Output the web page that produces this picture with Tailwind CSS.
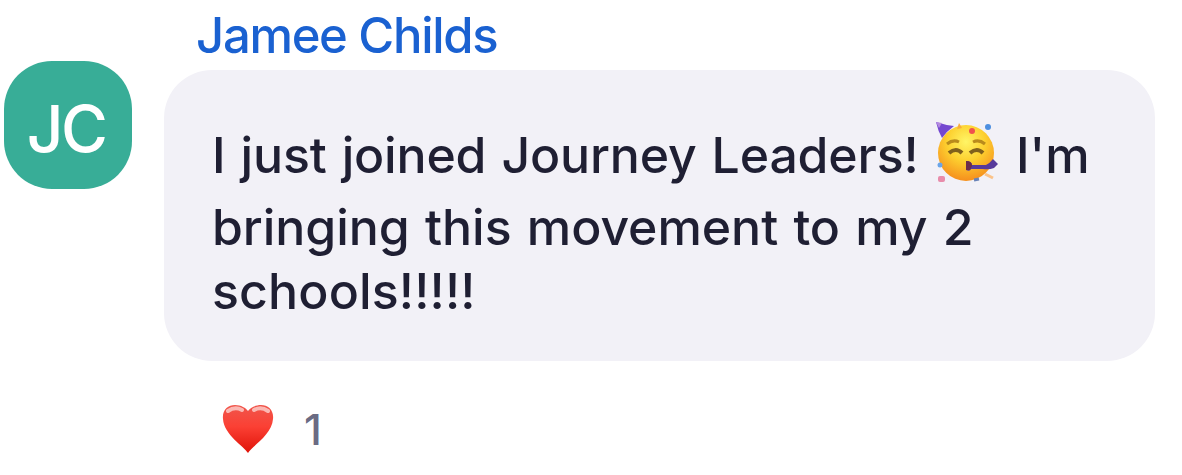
<!DOCTYPE html>
<html lang="en">
<head>
  <meta charset="UTF-8" />
  <meta name="viewport" content="width=device-width, initial-scale=1.0"/>
  <title>Chat Message</title>
  <script src="https://cdn.jsdelivr.net/npm/@tailwindcss/browser@4"></script>
</head>
<body class="bg-white font-['Inter','Liberation_Sans',sans-serif] overflow-hidden">

  <main class="flex items-start gap-8 pl-1">
    <!-- Avatar -->
    <div class="mt-[61px] w-32 h-32 shrink-0 rounded-[48px] bg-[#38ad97] text-white flex items-center justify-center">
      <span class="text-[64px] leading-none font-medium tracking-[-2.5px] pt-[7px] pr-[4px]">JC</span>
    </div>

    <div class="w-[991px]">
      <h1 class="h-[70px] pl-8 text-[49px] leading-[72px] font-medium tracking-[-1.3px] text-[#1a61d1] whitespace-nowrap">Jamee Childs</h1>

      <!-- Message bubble -->
      <div class="h-[291px] rounded-[48px] bg-[#f2f1f7] pt-[49px] pl-12">
        <p class="text-[50px] font-medium text-[#1f1f33] whitespace-nowrap [word-spacing:2px]">
          <span class="flex h-[72px] leading-[72px]">
            <span class="w-[705px] tracking-[-0.18px]">I just joined Journey Leaders!</span>
            <svg class="w-[66px] h-[64px] mt-px ml-[18px] shrink-0" viewBox="0 0 66 64">
              <defs>
                <radialGradient id="face" cx="0.5" cy="0.3" r="0.68">
                  <stop offset="0" stop-color="#fff566"/>
                  <stop offset="0.5" stop-color="#fdd02f"/>
                  <stop offset="1" stop-color="#f6921e"/>
                </radialGradient>
              </defs>
              <circle cx="31" cy="33" r="28" fill="url(#face)"/>
              <path d="M1 2Q10 5 19 6Q12 11 7 18Q3 11 1 2Z" fill="#7448d0"/>
              <path d="M1 2L7 3L4 8Z" fill="#b48ae0"/>
              <path d="M12 24Q18 19 24 22M38 22Q44 19 50 24" fill="none" stroke="#b98b1c" stroke-width="3"/>
              <path d="M14 33Q21 27 27 33M35 33Q42 27 48 33" fill="none" stroke="#80601c" stroke-width="4"/>
              <path d="M31 41Q37 41 37 45L51 45Q55 43 58 39L63 44L59 48Q54 50 48 49L36 49Q35 52 31 50Z" fill="#573a9b"/>
              <path d="M31 41Q37 41 37 46L35 50L31 50Z" fill="#6b2c4a"/>
              <circle cx="37" cy="11" r="3" fill="#f0524e"/>
              <circle cx="53" cy="7" r="3" fill="#4d8fe0"/>
              <circle cx="5" cy="45" r="2.5" fill="#6ba5e8"/>
              <rect x="3" y="56" width="7" height="6" rx="2" fill="#e88cab"/>
              <path d="M24 3L27 8L22 9Z" fill="#f8ac3c"/>
              <path d="M50 54L58 58" stroke="#fbc38a" stroke-width="3"/>
              <path d="M39 60L44 59" stroke="#6883b8" stroke-width="3"/>
            </svg>
            <span class="ml-[15px]">I'm</span>
          </span>
          <span class="block h-[72px] leading-[72px] tracking-[-0.05px]">bringing this movement to my 2</span>
          <span class="block h-[56px] leading-[56px] tracking-[0.15px]">schools!!!!!</span>
        </p>
      </div>

      <!-- Reactions -->
      <div class="mt-[41px] pl-[58px] flex items-start">
        <svg class="w-[52px] h-[52px] shrink-0" viewBox="0 0 52 52">
          <defs>
            <linearGradient id="heart" x1="0" y1="0" x2="0" y2="1">
              <stop offset="0" stop-color="#f0564c"/>
              <stop offset="0.45" stop-color="#fb4034"/>
              <stop offset="1" stop-color="#e01309"/>
            </linearGradient>
          </defs>
          <path d="M26 51C22 44 2 33 1 17C0 8 6 3 13 3C19 3 24 6 26 9C28 6 33 3 39 3C46 3 52 8 51 17C50 33 30 44 26 51Z" fill="url(#heart)"/>
          <path d="M6 9Q13 4 20 8M32 8Q39 4 46 9" fill="none" stroke="#fbb8b3" stroke-width="4" stroke-linecap="round"/>
        </svg>
        <span class="ml-[30px] text-[43px] leading-[55px] font-medium text-[#6b6b83]">1</span>
      </div>
    </div>
  </main>

</body>
</html>
